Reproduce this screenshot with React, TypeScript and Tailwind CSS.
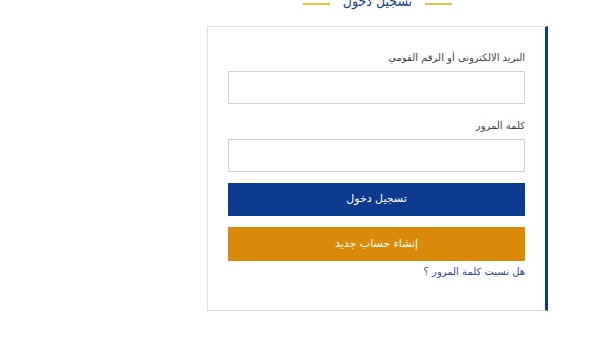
import React from "react";

export default function App() {
  const font = { fontFamily: '"DejaVu Sans", "Noto Sans", sans-serif' };
  const titleFont = { fontFamily: '"DejaVu Sans Condensed", "DejaVu Sans", sans-serif' };
  return (
    <div className="w-[600px] h-[338px] bg-white overflow-hidden" style={font} dir="rtl">
      <div className="w-[341px] ml-[207px] mr-auto" dir="ltr">
        <div className="h-[26px] flex items-start justify-center gap-[13px] -mt-[9px]">
          <div className="w-[27px] h-[2px] bg-[#e3c23c] mt-[12px]" />
          <div className="text-[14px] leading-[20px] text-[#1b3f8e] font-normal" style={titleFont} dir="rtl">تسجيل دخول</div>
          <div className="w-[27px] h-[2px] bg-[#e3c23c] mt-[12px]" />
        </div>
        <div className="mt-[9px] h-[285px] border border-[#dedede] border-r-[3px] border-r-[#0b3a93] pt-[24px] px-[20px]" dir="rtl">
          <div className="text-[10px] leading-[14px] text-[#444]">البريد الالكترونى أو الرقم القومي</div>
          <div className="mt-[6px] h-[33px] border border-[#d4d4d4] bg-white" />
          <div className="mt-[15px] text-[10px] leading-[14px] text-[#444]">كلمة المرور</div>
          <div className="mt-[6px] h-[33px] border border-[#d4d4d4] bg-white" />
          <button className="mt-[11px] w-full h-[33px] bg-[#0b3a8e] text-white text-[11px] font-normal flex items-center justify-center">
            تسجيل دخول
          </button>
          <button className="mt-[11px] w-full h-[34px] bg-[#d98a08] text-white text-[11px] font-normal flex items-center justify-center">
            إنشاء حساب جديد
          </button>
          <div className="mt-[4px] text-[10px] leading-[14px] text-[#2e4a8a]">هل نسيت كلمة المرور ؟</div>
        </div>
      </div>
    </div>
  );
}
